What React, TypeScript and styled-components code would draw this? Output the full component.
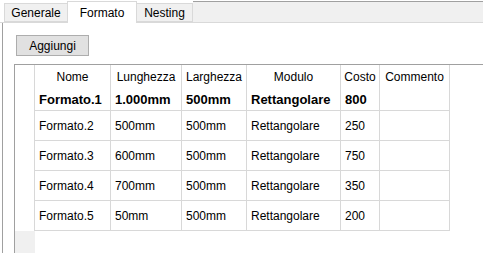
import styled, { createGlobalStyle } from 'styled-components';

const GlobalStyle = createGlobalStyle`
  body {
    margin: 0;
    background: #ffffff;
    font-family: 'Liberation Sans', Arial, sans-serif;
    font-size: 12px;
    color: #000000;
  }
`;

const Window = styled.div`
  width: 483px;
  height: 253px;
  display: flex;
  flex-direction: column;
  overflow: hidden;
`;

const TabStrip = styled.div`
  display: flex;
  align-items: flex-end;
  height: 22px;
  padding-left: 4px;
  border-bottom: 1px solid #d9d9d9;
`;

const Tab = styled.div<{ $active?: boolean; $w: number }>`
  display: flex;
  align-items: center;
  justify-content: center;
  box-sizing: border-box;
  width: ${p => p.$w}px;
  height: ${p => (p.$active ? 22 : 19)}px;
  margin-bottom: ${p => (p.$active ? -1 : 0)}px;
  margin-left: ${p => (p.$active ? -1 : 0)}px;
  margin-right: ${p => (p.$active ? -1 : 0)}px;
  position: relative;
  z-index: ${p => (p.$active ? 1 : 0)};
  background: ${p => (p.$active ? '#ffffff' : '#f0f0f0')};
  border: 1px solid #d9d9d9;
  border-bottom: ${p => (p.$active ? 'none' : '1px solid #d9d9d9')};
  padding-top: ${p => (p.$active ? 0 : 1)}px;
`;

const StripFiller = styled.div`
  flex: 1;
  align-self: stretch;
  margin-top: 1px;
  background: #f0f0f0;
  border-top: 1px solid #a0a0a0;
`;

const Page = styled.div`
  flex: 1;
  margin-left: 2px;
  border-left: 1px solid #a0a0a0;
  display: flex;
  flex-direction: column;
  padding: 12px 0 0 11px;
`;

const Button = styled.button`
  width: 73px;
  height: 21px;
  margin-left: 2px;
  padding: 0;
  font: inherit;
  color: #000000;
  background: #e1e1e1;
  border: 1px solid #adadad;
`;

const Frame = styled.div`
  flex: 1;
  margin-top: 8px;
  border-top: 1px solid #a0a0a0;
  border-left: 1px solid #a0a0a0;
  display: flex;
  flex-direction: column;
`;

const Grid = styled.div`
  display: grid;
  grid-template-columns: 20px 76px 71px 65px 94px 39px 70px;
`;

const Cell = styled.div<{ $h: number; $bold?: boolean; $head?: boolean }>`
  box-sizing: border-box;
  height: ${p => p.$h}px;
  display: flex;
  align-items: center;
  justify-content: ${p => (p.$head ? 'center' : 'flex-start')};
  padding: 0 0 0 ${p => (p.$head ? 0 : 4)}px;
  border-right: 1px solid #d8d8d8;
  border-bottom: ${p => (p.$head ? 'none' : '1px solid #d8d8d8')};
  font-size: ${p => (p.$bold ? 13 : 12)}px;
  font-weight: ${p => (p.$bold ? 700 : 400)};
  white-space: nowrap;
`;

const RowHead = styled.div<{ $h: number }>`
  box-sizing: border-box;
  height: ${p => p.$h}px;
  border-right: 1px solid #d8d8d8;
`;

const BelowRows = styled.div`
  flex: 1;
  width: 20px;
  background: #f0f0f0;
`;

const tabs = [
  { label: 'Generale', w: 64 },
  { label: 'Formato', w: 70, active: true },
  { label: 'Nesting', w: 57 }
];

const columns = ['Nome', 'Lunghezza', 'Larghezza', 'Modulo', 'Costo', 'Commento'];

const rows = [
  ['Formato.1', '1.000mm', '500mm', 'Rettangolare', '800', ''],
  ['Formato.2', '500mm', '500mm', 'Rettangolare', '250', ''],
  ['Formato.3', '600mm', '500mm', 'Rettangolare', '750', ''],
  ['Formato.4', '700mm', '500mm', 'Rettangolare', '350', ''],
  ['Formato.5', '50mm', '500mm', 'Rettangolare', '200', '']
];

export default function App() {
  return (
    <Window>
      <GlobalStyle />
      <TabStrip>
        {tabs.map(t => (
          <Tab key={t.label} $w={t.w} $active={t.active}>
            {t.label}
          </Tab>
        ))}
        <StripFiller />
      </TabStrip>
      <Page>
        <Button>Aggiungi</Button>
        <Frame>
          <Grid>
            <RowHead $h={24} />
            {columns.map(c => (
              <Cell key={c} $h={24} $head>
                {c}
              </Cell>
            ))}
            {rows.map((r, i) => {
              const h = i === 0 ? 22 : 30;
              return [
                <RowHead key={`h${i}`} $h={h} />,
                ...r.map((v, j) => (
                  <Cell key={`${i}-${j}`} $h={h} $bold={i === 0}>
                    {v}
                  </Cell>
                ))
              ];
            })}
          </Grid>
          <BelowRows />
        </Frame>
      </Page>
    </Window>
  );
}
